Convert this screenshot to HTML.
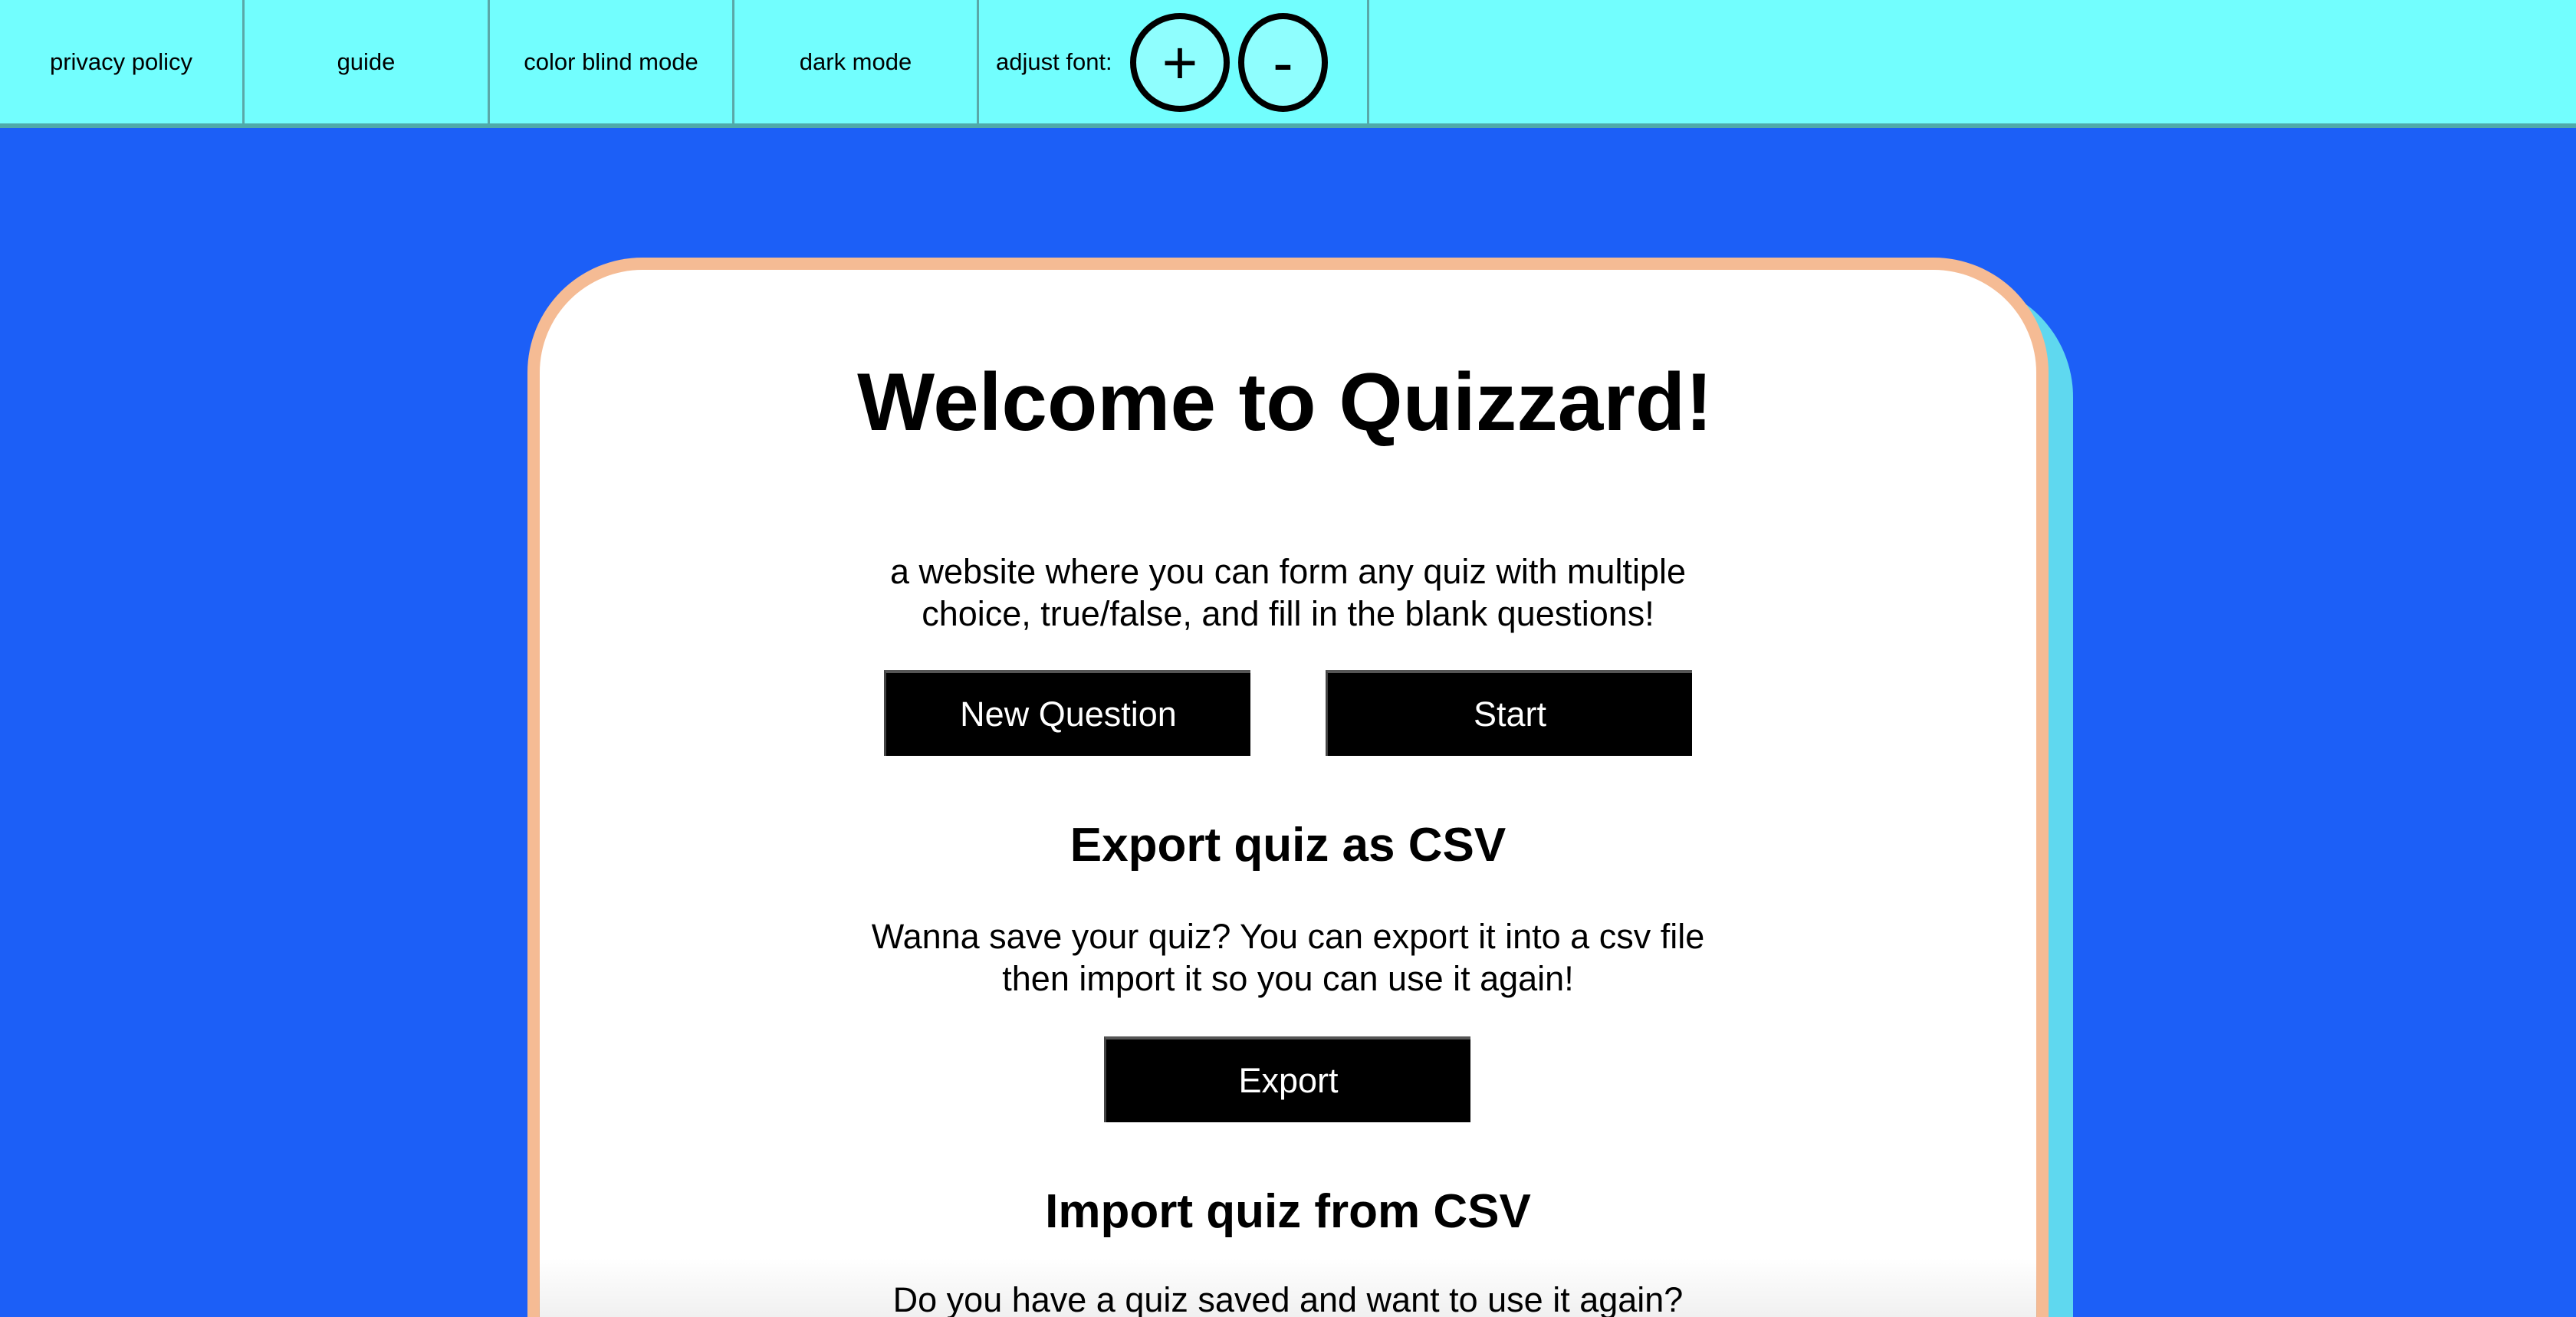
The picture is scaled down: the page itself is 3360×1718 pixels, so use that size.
<!DOCTYPE html>
<html><head><meta charset="utf-8"><style>
html,body{margin:0;padding:0;width:3360px;height:1718px;overflow:hidden;background:#1c5ff7;font-family:"Liberation Sans",sans-serif;}
#wrap{position:relative;width:3360px;height:1718px;overflow:hidden;}
.nav{position:absolute;left:0;top:0;width:3360px;height:161px;background:#72fefe;border-bottom:6px solid #4faaaa;}
.cell{position:absolute;top:0;height:161px;border-right:3px solid #5aa8a8;font-size:31px;color:#000;display:flex;align-items:center;justify-content:center;}
.circ{position:absolute;border:8px solid #000;border-radius:50%;background:#8ffefe;box-sizing:border-box;display:flex;align-items:center;justify-content:center;font-size:80px;line-height:1;}
.shadow{position:absolute;left:720px;top:368px;width:1984px;height:1350px;border-radius:150px 150px 0 0;background:#5fd8ef;}
.card{position:absolute;left:688px;top:336px;width:1984px;height:1382px;box-sizing:border-box;border:16px solid #f5bb94;border-bottom:none;border-radius:150px 150px 0 0;background:#fff;}
.t{position:absolute;left:0;width:3360px;text-align:center;color:#000;}
.btn{position:absolute;height:112px;width:478px;background:#000;color:#fff;font-size:45px;display:flex;align-items:center;justify-content:center;border-top:4px solid #555;border-left:3px solid #444;box-sizing:border-box;}
.fade{position:absolute;left:703px;top:1640px;width:1954px;height:78px;background:linear-gradient(rgba(0,0,0,0),rgba(0,0,0,0.06));}
</style></head><body><div id="wrap">
<div class="nav">
<div class="cell" style="left:0;width:316px">privacy policy</div>
<div class="cell" style="left:319px;width:317px">guide</div>
<div class="cell" style="left:639px;width:316px">color blind mode</div>
<div class="cell" style="left:958px;width:316px">dark mode</div>
<div class="cell" style="left:1277px;width:509px;justify-content:flex-start;padding-left:22px;box-sizing:border-box">adjust font:</div>
<div class="circ" style="left:1474px;top:17px;width:130px;height:129px">+</div>
<div class="circ" style="left:1615px;top:17px;width:117px;height:129px">-</div>
</div>
<div class="shadow"></div>
<div class="card"></div>
<div class="t" style="top:462px;font-size:107px;font-weight:bold;left:-4px">Welcome to Quizzard!</div>
<div class="t" style="top:718px;font-size:45px;line-height:55px">a website where you can form any quiz with multiple<br>choice, true/false, and fill in the blank questions!</div>
<div class="btn" style="left:1153px;top:874px">New Question</div>
<div class="btn" style="left:1729px;top:874px">Start</div>
<div class="t" style="top:1067px;font-size:62px;font-weight:bold">Export quiz as CSV</div>
<div class="t" style="top:1194px;font-size:45px;line-height:55px">Wanna save your quiz? You can export it into a csv file<br>then import it so you can use it again!</div>
<div class="btn" style="left:1440px;top:1352px">Export</div>
<div class="t" style="top:1545px;font-size:62px;font-weight:bold">Import quiz from CSV</div>
<div class="t" style="top:1673px;font-size:45px;line-height:45px;height:45px;overflow:hidden">Do you have a quiz saved and want to use it again?</div>
<div class="fade"></div>
</div></body></html>
